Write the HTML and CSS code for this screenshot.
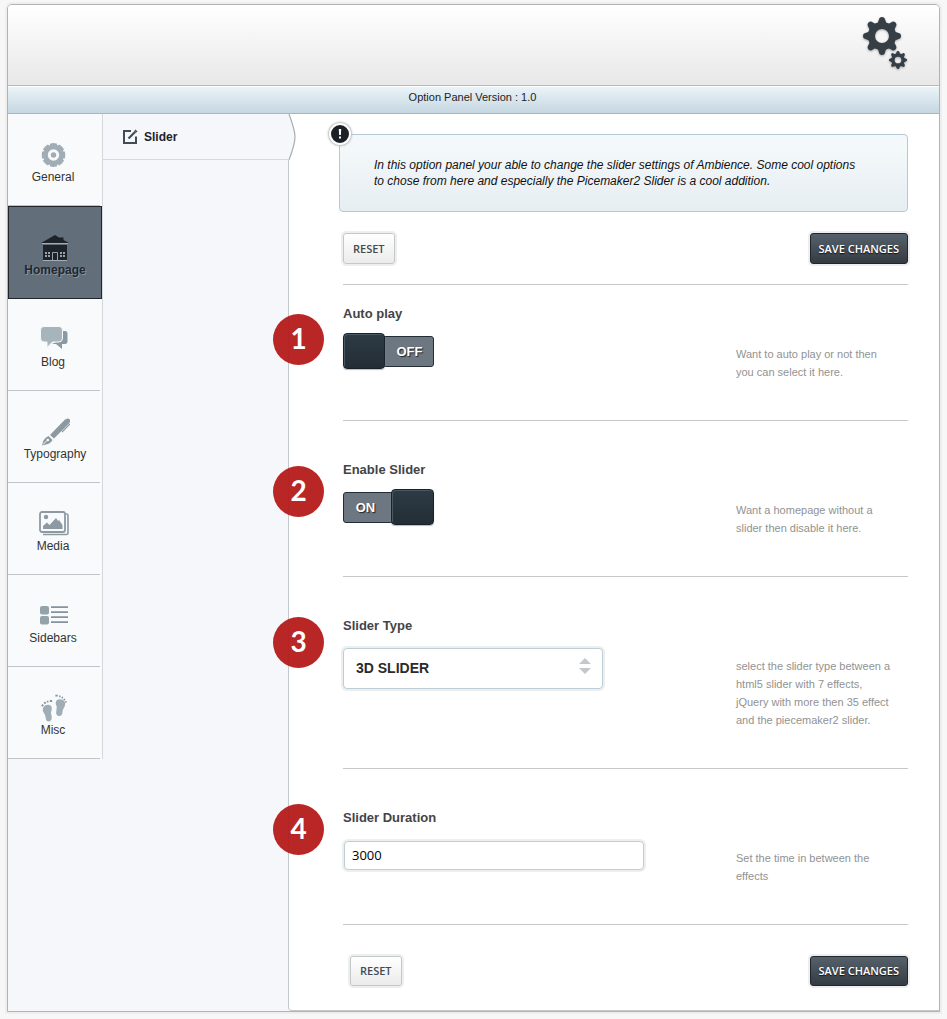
FILE: index.html
```html
<!DOCTYPE html>
<html lang="en">
<head>
<meta charset="utf-8">
<meta name="viewport" content="width=device-width, initial-scale=1">
<title>Option Panel</title>
<link rel="stylesheet" href="styles.css">
</head>
<body>
<div class="panel">
  <header class="header">
    <svg class="logo" width="48" height="56" viewBox="0 0 48 56" aria-hidden="true">
      <defs>
        <g id="teeth">
          <path d="M-6.500-11Q-3.500-13.500-3.200-16Q-2.700-19 0-19Q2.700-19 3.200-16Q3.500-13.500 6.500-11Z"/>
        </g>
        <g id="cog">
          <path fill-rule="evenodd" d="M0-14A14 14 0 1 1 0 14A14 14 0 1 1 0-14ZM0-7A7 7 0 1 0 0 7A7 7 0 1 0 0-7Z"/>
          <use href="#teeth"/><use href="#teeth" transform="rotate(45)"/><use href="#teeth" transform="rotate(90)"/><use href="#teeth" transform="rotate(135)"/>
          <use href="#teeth" transform="rotate(180)"/><use href="#teeth" transform="rotate(225)"/><use href="#teeth" transform="rotate(270)"/><use href="#teeth" transform="rotate(315)"/>
        </g>
      </defs>
      <use href="#cog" transform="translate(21 21)"/>
      <use href="#cog" transform="translate(37 45) scale(.48)"/>
    </svg>
  </header>
  <div class="version">Option Panel Version : 1.0</div>
  <div class="body">
    <nav class="sections" aria-label="Sections">
      <a class="section" href="#general">
        <svg width="28" height="28" viewBox="0 0 28 28" fill="#a0adb5" stroke="#a0adb5">
          <circle cx="13.500" cy="14" r="10"/>
          <path d="M13.500 2V26M1.500 14H25.500M5 5.500L22 22.500M22 5.500L5 22.500" stroke-width="7"/>
          <circle cx="13.500" cy="14" r="12.500" fill="none" stroke="#f8fafb" stroke-width="1"/>
          <circle cx="13.500" cy="14" r="4.200" fill="#a0adb5" stroke="#f8fafb" stroke-width="3"/>
        </svg>
        <span>General</span>
      </a>
      <a class="section section-active" href="#homepage" aria-current="page">
        <svg width="28" height="28" viewBox="0 0 28 28" fill="#1d2329">
          <path d="M0 9L14 1L18 3.500H22.500V6L28 9Z"/>
          <path d="M2 11H26V26H2Z"/>
          <path d="M1 9.500H27M2 26.500H26" stroke="#a3adb4" stroke-width="1"/>
          <path d="M11.500 26V18.500H16.500V26" fill="none" stroke="#98a4ac"/>
          <path d="M4 18H6V20H4ZM7 18H9V20H7ZM4 21H6V23H4ZM7 21H9V23H7ZM19 18H21V20H19ZM22 18H24V20H22ZM19 21H21V23H19ZM22 21H24V23H22Z" fill="#98a4ac"/>
        </svg>
        <span>Homepage</span>
      </a>
      <a class="section" href="#blog">
        <svg width="28" height="28" viewBox="0 0 28 28">
          <path d="M20 5H25Q27.500 5 27.500 7.500V15Q27.500 18 25 18H22V23L16 18H12L16 16H20Z" fill="#8b99a2"/>
          <path d="M4 .5H19Q22.500.5 22.500 4V12Q22.500 16 19 16H12.500L7 21.500V16H4Q.5 16 .5 12V4Q.5.500 4 .5Z" fill="#a6b4bc" stroke="#f8fafb"/>
        </svg>
        <span>Blog</span>
      </a>
      <a class="section section-wide" href="#typography">
        <svg width="28" height="28" viewBox="0 0 28 28" fill="#8d99a1">
          <path d="M8 17L22.500 2Q25-.5 27.500 1Q29 3 27 5.500L12 20.500Z"/>
          <path d="M28 6L20 14" stroke="#8d99a1" stroke-width="1.200"/>
          <path d="M6.500 18L10.500 22Q9 26 0 27.500Q1 20.500 6.500 18Z"/>
          <path d="M1 26.500L5 22.500" stroke="#f8fafb"/><circle cx="5.800" cy="22" r="1.300" fill="#f8fafb"/>
        </svg>
        <span>Typography</span>
      </a>
      <a class="section" href="#media">
        <svg width="30" height="28" viewBox="0 0 30 28" fill="none" stroke="#8d9aa3">
          <path d="M27 4H28Q29 4 29 6V23Q29 24.500 27.500 24.500H4" stroke-width="1.600"/>
          <rect x="1" y="2" width="25" height="20" rx="2" stroke-width="1.800"/>
          <circle cx="7" cy="7" r="2.200" fill="#8d9aa3" stroke="none"/>
          <path d="M4 19V16L8 12.500L10.500 15L17 8L19 11L20 10L23.500 15V19Z" fill="#8d9aa3" stroke="none"/>
        </svg>
        <span>Media</span>
      </a>
      <a class="section" href="#sidebars">
        <svg width="28" height="28" viewBox="0 0 28 28" fill="#94a2aa">
          <rect y="4" width="9" height="8.500" rx="2"/><rect y="14" width="9" height="8.500" rx="2"/>
          <path d="M11 5.200H28M11 10.200H28M11 15.200H28M11 20.200H28" stroke="#8593a0" stroke-width="1.800"/>
        </svg>
        <span>Sidebars</span>
      </a>
      <a class="section" href="#misc">
        <svg width="28" height="28" viewBox="0 0 28 30" fill="#a0adb5">
          <path d="M2 16Q3 11.500 8 11.500Q12.500 12 11.500 17Q10 20 11.500 24Q12 29.500 8 29.500Q5.500 29.500 5 25Q4.500 21 3 20Q1.500 18 2 16Z"/>
          <path d="M16 11Q15 6 20 5.500Q25 5.500 26 10Q26 13 24.500 15Q23 17 23 20Q22.500 24 19 23.500Q15.500 23 16.500 18Q18 14 16 11Z"/>
          <path d="M.800 13L2.500 11.500M3.500 10L5.200 9M6.500 8.500L8 8M9.500 7.500H12M15.500 1.800H18M19.500 2.500H21M22.200 3.500L23.500 4.200M24.500 5.500L25.700 6.500M26.200 8L27.200 9" stroke="#8593a0" stroke-width="2"/>
        </svg>
        <span>Misc</span>
      </a>
    </nav>
    <nav class="pages" aria-label="Pages">
      <a class="page" href="#slider">
        <svg width="16" height="16" viewBox="0 0 16 16" fill="none" stroke="#424c56" stroke-width="2">
          <path d="M9 2H2V14H14V7.500"/><path d="M6.500 9.500L13.500 2.500" stroke-width="2.200"/><path d="M13 1L15 3" stroke-width="1.500"/>
        </svg>
        <span>Slider</span>
        <svg class="page-tip" width="10" height="46" viewBox="0 0 10 46">
          <path d="M0 0H1Q7 16 7 23Q7 30 1 46H0Z" fill="#f5f7fa"/>
          <path d="M1 0Q7 16 7 23Q7 30 1 46" fill="none" stroke="#a9adb1" stroke-width="1.200"/>
        </svg>
      </a>
    </nav>
    <main class="main">
      <form class="form">
        <div class="notice">
          <span class="notice-mark" aria-hidden="true"><svg width="16" height="16" viewBox="0 0 16 16" fill="#fff"><path d="M6.800 3H9.200L8.900 9H7.100ZM7 10.500H9V12.500H7Z"/></svg></span>
          <p>In this option panel your able to change the slider settings of Ambience. Some cool options<br>to chose from here and especially the Picemaker2 Slider is a cool addition.</p>
        </div>
        <div class="actions">
          <button class="button" type="reset">RESET</button>
          <button class="button button-dark" type="submit">SAVE CHANGES</button>
        </div>
        <div class="field field-first">
          <span class="badge badge-1">1</span>
          <div class="control">
            <label class="title" for="autoplay">Auto play</label>
            <span class="toggle">
              <input class="toggle-input" type="checkbox" id="autoplay">
              <span class="toggle-text">OFF</span><span class="toggle-knob"></span>
            </span>
          </div>
          <p class="help">Want to auto play or not then you can select it here.</p>
        </div>
        <div class="field">
          <span class="badge badge-2">2</span>
          <div class="control">
            <label class="title" for="enable">Enable Slider</label>
            <span class="toggle toggle-on">
              <input class="toggle-input" type="checkbox" id="enable" checked>
              <span class="toggle-text">ON</span><span class="toggle-knob"></span>
            </span>
          </div>
          <p class="help">Want a homepage without a slider then disable it here.</p>
        </div>
        <div class="field">
          <span class="badge badge-3">3</span>
          <div class="control">
            <label class="title" for="type">Slider Type</label>
            <span class="select-wrap">
              <select class="select" id="type"><option>3D SLIDER</option></select>
              <svg class="select-arrows" width="12" height="16" viewBox="0 0 12 16" fill="#c5c8ca"><path d="M0 6L6 0L12 6ZM0 10H12L6 16Z"/></svg>
            </span>
          </div>
          <p class="help">select the slider type between a html5 slider with 7 effects, jQuery with more then 35 effect and the piecemaker2 slider.</p>
        </div>
        <div class="field">
          <span class="badge badge-4">4</span>
          <div class="control">
            <label class="title" for="duration">Slider Duration</label>
            <input class="input" type="text" id="duration" value="3000">
          </div>
          <p class="help">Set the time in between the effects</p>
        </div>
        <div class="actions actions-bottom">
          <button class="button" type="reset">RESET</button>
          <button class="button button-dark" type="submit">SAVE CHANGES</button>
        </div>
      </form>
    </main>
  </div>
</div>
</body>
</html>
```
FILE: styles.css
```css
* {
  box-sizing: border-box;
}

body {
  margin: 0;
  padding: 4px 7px 7px;
  background: #f7f7f7;
  color: #222;
  font: 12px/16px "Liberation Sans", Arial, sans-serif;
}

p {
  margin: 0;
}

.panel {
  border: 1px solid #b3b3b3;
  border-radius: 5px 5px 0 0;
  background: #f5f7fa;
  box-shadow: 0 0 0 2px #eee;
}

.header {
  display: flex;
  justify-content: flex-end;
  height: 81px;
  padding: 10px 30px 0 0;
  border-bottom: 1px solid #b9b9b9;
  border-radius: 4px 4px 0 0;
  background: linear-gradient(#fff, #e8e8e8);
}

.logo {
  fill: #363e46;
  filter: drop-shadow(0 1px 1px #aaa);
}

.version {
  height: 28px;
  padding-right: 2px;
  border-top: 1px solid #fff;
  border-bottom: 1px solid #adb5ba;
  background: linear-gradient(#eaf3f8, #c6d7e1);
  font-size: 11px;
  line-height: 21px;
  text-align: center;
}

.body {
  display: flex;
}

.sections {
  flex: none;
  align-self: flex-start;
  width: 95px;
  border-right: 1px solid #d5d8da;
  background: #f8fafb;
}

.section {
  display: flex;
  flex-direction: column;
  align-items: center;
  height: 92px;
  margin-right: 2px;
  padding: 27px 2px 0 0;
  border-bottom: 1px solid #c1c4c6;
  color: #333;
  text-decoration: none;
}

.section svg {
  flex: none;
  margin-left: 2px;
}

.section-wide {
  padding: 27px 0 0 2px;
}

.section-active {
  height: 93px;
  margin-right: 0;
  padding-right: 0;
  border: 1px solid #20262c;
  background: #626e7a;
  color: #22282e;
  font-weight: bold;
  text-shadow: 1px 1px 0 #8a949d;
}

.section-active svg {
  margin-left: 0;
}

.pages {
  flex: none;
  width: 185px;
}

.page {
  position: relative;
  display: flex;
  align-items: center;
  gap: 6px;
  height: 46px;
  padding-left: 19px;
  border-bottom: 1px solid #d3d9dc;
  color: #1d2227;
  font-weight: bold;
  text-decoration: none;
}

.page-tip {
  position: absolute;
  top: 0;
  right: -10px;
}

.main {
  flex: 1;
  min-width: 0;
  border-left: 1px solid #c3c8cc;
  border-bottom: 1px solid #c8c8c8;
  border-radius: 0 0 0 4px;
  background: #fff;
}

.form {
  padding: 20px 31px 24px 54px;
}

.notice {
  position: relative;
  margin-left: -4px;
  padding: 22px 34px;
  border: 1px solid #b1cad6;
  border-radius: 4px;
  background: linear-gradient(#f6f8fc, #f3f8f9 20%, #ecf2f6 60%, #e7eef2);
  color: #111;
  font-style: italic;
}

.notice-mark {
  position: absolute;
  top: -12px;
  left: -11px;
  display: grid;
  place-items: center;
  width: 22px;
  height: 22px;
  border: 2px solid #fff;
  border-radius: 50%;
  background: #1c2127;
  box-shadow: 0 0 2px 1px #bbb;
}

.actions {
  display: flex;
  justify-content: space-between;
  padding: 21px 0 20px;
  border-bottom: 1px solid #c4c8c8;
}

.actions-bottom {
  padding: 31px 0 0 7px;
  border: 0;
}

.button {
  height: 31px;
  padding: 0 9px;
  border: 1px solid #c3c8c8;
  border-radius: 3px;
  background: linear-gradient(#fff, #ebebeb);
  box-shadow: 0 0 0 2px #eee;
  color: #424b54;
  font: 600 11px/16px "Open Sans", sans-serif;
}

.button-dark {
  padding: 0 8px;
  border-color: #20262c;
  background: linear-gradient(#55616b, #343b43);
  color: #fff;
  text-shadow: 0 1px 1px #111;
}

.actions-bottom .button {
  height: 30px;
}

.field {
  position: relative;
  display: grid;
  grid-template-columns: 1fr 172px;
  padding: 39px 0;
  border-bottom: 1px solid #c4c8c8;
}

.field-first {
  padding-top: 19px;
}

.control {
  display: flex;
  flex-direction: column;
  align-items: flex-start;
  height: 60px;
}

.title {
  flex: none;
  color: #444;
  font-size: 13px;
  font-weight: bold;
  line-height: 20px;
}

.help {
  padding: 41px 14px 0 0;
  color: #929292;
  font-size: 11px;
  line-height: 18px;
}

.badge {
  position: absolute;
  left: -70px;
  width: 51px;
  height: 51px;
  border-radius: 50%;
  background: rgba(180, 24, 24, .94);
  color: #fff;
  font: bold 28px/49px Lato, sans-serif;
  text-align: center;
}

.badge-1 {
  top: 29px;
}

.badge-2 {
  top: 45px;
}

.badge-3 {
  top: 40px;
}

.badge-4 {
  top: 35px;
}

.toggle {
  position: relative;
  display: flex;
  flex: none;
  align-items: center;
  width: 91px;
  height: 36px;
  margin-top: 9px;
}

.toggle-text {
  flex: 1;
  height: 31px;
  padding-left: 42px;
  border: 1px solid #232d35;
  border-radius: 3px;
  background: #6c7781;
  color: #fff;
  font-size: 13px;
  font-weight: bold;
  line-height: 29px;
  text-align: center;
  text-shadow: 1px 1px 1px #222;
}

.toggle-knob {
  position: absolute;
  top: 0;
  left: 0;
  width: 42px;
  height: 36px;
  border: 1px solid #18222a;
  border-radius: 4px;
  background: linear-gradient(#2d3b46, #232d35);
  box-shadow: inset 1px 1px 0 #4a5863, 0 1px 1px #bbb;
}

.toggle-on .toggle-text {
  padding: 0 46px 0 0;
}

.toggle-on .toggle-knob {
  right: 0;
  left: auto;
  width: 43px;
}

.toggle-input {
  position: absolute;
  inset: 0;
  z-index: 1;
  width: 100%;
  height: 100%;
  margin: 0;
  opacity: 0;
}

.select-wrap {
  position: relative;
  flex: none;
  width: 260px;
  margin-top: 12px;
}

.select {
  display: block;
  width: 100%;
  height: 41px;
  padding: 0 12px 2px;
  border: 1px solid #bccfd9;
  border-radius: 4px;
  appearance: none;
  background: #fff;
  box-shadow: 0 0 0 2px #eee;
  color: #2b2b2b;
  font: bold 14px/20px "Liberation Sans", Arial, sans-serif;
}

.select-arrows {
  position: absolute;
  top: 10px;
  right: 12px;
  pointer-events: none;
}

.input {
  flex: none;
  width: 300px;
  height: 29px;
  margin: 13px 0 0 1px;
  padding: 0 7px 2px;
  border: 1px solid #bccfd9;
  border-radius: 4px;
  background: #fff;
  box-shadow: 0 0 0 2px #eee;
  color: #000;
  font: 13px/18px "Open Sans", sans-serif;
}
```
